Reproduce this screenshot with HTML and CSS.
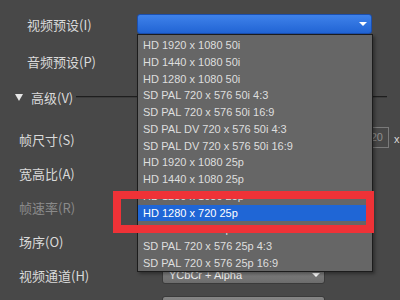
FILE: index.html
```html
<!DOCTYPE html>
<html lang="zh-CN">
<head>
  <meta charset="UTF-8">
  <title>视频预设</title>
  <link rel="stylesheet" href="styles.css">
</head>
<body>
  <div class="screen">
    <div class="row top-row r1">
      <label class="label">视频预设(I)</label>
      <div class="select blue"><span class="arrow"></span></div>
    </div>
    <div class="row top-row r2">
      <label class="label">音频预设(P)</label>
      <div class="select grey"><span class="arrow"></span></div>
    </div>

    <div class="group-head">
      <span class="tri"></span>
      <span class="group-title">高级(V)</span>
      <span class="group-line"></span>
    </div>

    <div class="row adv-row">
      <label class="label">帧尺寸(S)</label>
      <div class="select grey short"><span class="arrow"></span></div>
      <div class="num">1920</div>
      <span class="times">x</span>
    </div>
    <div class="row adv-row">
      <label class="label">宽高比(A)</label>
      <div class="select grey short"><span class="arrow"></span></div>
    </div>
    <div class="row adv-row">
      <label class="label disabled">帧速率(R)</label>
      <div class="select grey short"><span class="arrow"></span></div>
    </div>
    <div class="row adv-row">
      <label class="label">场序(O)</label>
      <div class="select grey short"><span class="arrow"></span></div>
    </div>
    <div class="row adv-row">
      <label class="label">视频通道(H)</label>
      <div class="select grey short"><span class="value">YCbCr + Alpha</span><span class="arrow"></span></div>
    </div>
    <div class="row adv-row last">
      <label class="label"></label>
      <div class="select grey short"></div>
    </div>

    <!-- open list of the video preset dropdown -->
    <ul class="menu">
      <li>HD 1920 x 1080 50i</li>
      <li>HD 1440 x 1080 50i</li>
      <li>HD 1280 x 1080 50i</li>
      <li>SD PAL 720 x 576 50i 4:3</li>
      <li>SD PAL 720 x 576 50i 16:9</li>
      <li>SD PAL DV 720 x 576 50i 4:3</li>
      <li>SD PAL DV 720 x 576 50i 16:9</li>
      <li>HD 1920 x 1080 25p</li>
      <li>HD 1440 x 1080 25p</li>
      <li>HD 1280 x 1080 25p</li>
      <li class="active">HD 1280 x 720 25p</li>
      <li>HD 960 x 720 25p</li>
      <li>SD PAL 720 x 576 25p 4:3</li>
      <li>SD PAL 720 x 576 25p 16:9</li>
    </ul>

    <div class="mark"></div>
  </div>
</body>
</html>
```

FILE: styles.css
```css
body {
  margin: 0;
  background: #484848;
  font-family: "Liberation Sans", Arial, sans-serif;
}
.screen {
  position: relative;
  width: 400px;
  height: 300px;
  overflow: hidden;
  padding-top: 6px;
  box-sizing: border-box;
}
.row {
  display: flex;
  align-items: center;
  height: 34px;
}
.label {
  flex: none;
  font-family: "Noto Sans CJK SC", "Liberation Sans", sans-serif;
  font-size: 13px;
  color: #dadada;
}
.label.disabled { color: #8a8a8a; }

.top-row { padding-left: 27px; }
.top-row .label { width: 110px; }
.r1 { height: 36px; }
.r2 { height: 38px; }

.adv-row { padding-left: 19px; }
.adv-row .label { width: 143px; }
.adv-row.last .select { align-self: flex-start; margin-top: 4px; }

.select {
  position: relative;
  box-sizing: border-box;
  height: 17px;
  border-radius: 3px;
}
.select.blue {
  width: 235px;
  height: 20px;
  background: linear-gradient(#3f82ea, #2164d4);
  border: 1px solid #1b4fae;
}
.select.grey {
  width: 235px;
  background: linear-gradient(#858585, #6c6c6c);
  border: 1px solid #3a3a3a;
}
.select.short { width: 163px; }
.select .value {
  display: block;
  padding-left: 6px;
  font-size: 11px;
  line-height: 15px;
  color: #f0f0f0;
}
.arrow {
  position: absolute;
  right: 4px;
  top: 50%;
  margin-top: -2px;
  border-left: 4px solid transparent;
  border-right: 4px solid transparent;
  border-top: 4px solid #ffffff;
}

.group-head {
  display: flex;
  align-items: center;
  height: 34px;
  margin-bottom: 8px;
  padding-left: 15px;
  margin-right: 13px;
}
.tri {
  border-left: 4px solid transparent;
  border-right: 4px solid transparent;
  border-top: 7px solid #e6e6e6;
  margin-right: 8px;
}
.group-title {
  font-family: "Noto Sans CJK SC", "Liberation Sans", sans-serif;
  font-size: 13px;
  color: #dadada;
}
.group-line {
  flex: 1;
  margin-left: 3px;
  border-top: 1px solid #1e1e1e;
  border-bottom: 1px solid #3c3c3c;
}

.num {
  box-sizing: border-box;
  width: 52px;
  height: 21px;
  margin-left: 12px;
  margin-top: -3px;
  border: 1px solid #7a7a7a;
  padding-right: 5px;
  text-align: right;
  font-size: 11px;
  line-height: 19px;
  color: #8e8e8e;
}
.times {
  margin-left: 5px;
  font-size: 11px;
  color: #dadada;
}

.menu {
  position: absolute;
  left: 137px;
  top: 34px;
  width: 236px;
  height: 238px;
  box-sizing: border-box;
  margin: 0;
  padding: 2px 0 0;
  list-style: none;
  background: #666666;
  border: 1px solid #1c1c1c;
  box-shadow: 2px 2px 3px rgba(0, 0, 0, 0.35);
}
.menu li {
  height: 16.75px;
  line-height: 17.5px;
  padding-left: 5px;
  font-size: 11px;
  color: #dedede;
  white-space: nowrap;
}
.menu li.active {
  background: #1f66d6;
  color: #ffffff;
}

.mark {
  position: absolute;
  left: 113px;
  top: 191px;
  width: 261px;
  height: 42px;
  box-sizing: border-box;
  border: 8px solid #ef3237;
}
```
